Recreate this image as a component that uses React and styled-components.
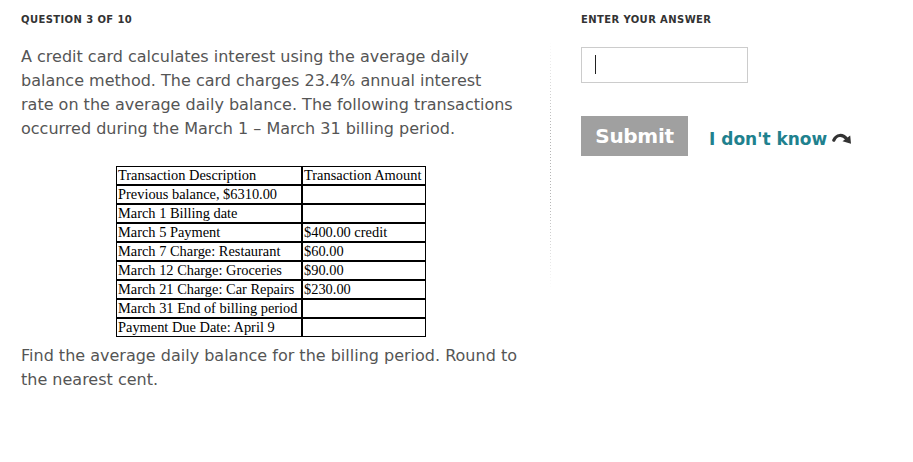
import React from 'react';
import styled, { createGlobalStyle } from 'styled-components';

const GlobalStyle = createGlobalStyle`
  body {
    margin: 0;
    background: #fff;
    font-family: "DejaVu Sans", Verdana, sans-serif;
  }
`;

const Page = styled.div`
  display: flex;
  align-items: flex-start;
  width: 913px;
  height: 462px;
  box-sizing: border-box;
  padding-top: 13px;
`;

const Question = styled.section`
  width: 550px;
  box-sizing: border-box;
  padding-left: 21px;
`;

const Label = styled.div`
  font-size: 10px;
  line-height: 14px;
  font-weight: bold;
  letter-spacing: 0.4px;
  color: #333;
  text-transform: uppercase;
`;

const Prompt = styled.p`
  width: 510px;
  margin: ${({ $top }) => $top || 0} 0 0;
  font-size: 16px;
  line-height: 24px;
  color: #555;
`;

const Transactions = styled.table`
  margin: 25px 0 0 95px;
  width: 310px;
  border: 1px solid #000;
  border-spacing: 0;
  font-family: "Liberation Serif", "Times New Roman", serif;
  font-size: 14.4px;
  color: #000;
`;

const Cell = styled.td`
  height: 17px;
  padding: 0 0 0 1px;
  line-height: 17px;
  white-space: nowrap;
  border-bottom: ${({ $last }) => ($last ? 'none' : '2px solid #000')};
  border-right: ${({ $first }) => ($first ? '2px solid #000' : 'none')};
  width: ${({ $first }) => ($first ? '183px' : 'auto')};
`;

const Divider = styled.div`
  width: 1px;
  height: 250px;
  margin-top: 27px;
  background: repeating-linear-gradient(to bottom, #b5b5b5 0 1px, transparent 1px 3px);
  mask-image: linear-gradient(to bottom, transparent, #000 35%, #000 65%, transparent);
`;

const Answer = styled.section`
  padding-left: 30px;
  display: flex;
  flex-direction: column;
`;

const InputWrap = styled.div`
  position: relative;
  margin-top: 20px;
  width: 167px;
  height: 36px;
`;

const AnswerInput = styled.input`
  width: 100%;
  height: 100%;
  box-sizing: border-box;
  border: 1px solid #ccc;
  padding: 0 13px;
  font-family: inherit;
  font-size: 16px;
  color: #333;
  outline: none;
`;

const Caret = styled.span`
  position: absolute;
  left: 14px;
  top: 8px;
  width: 1px;
  height: 19px;
  background: #222;
  pointer-events: none;
`;

const Actions = styled.div`
  display: flex;
  align-items: center;
  gap: 21px;
  margin-top: 33px;
`;

const SubmitButton = styled.button`
  width: 107px;
  height: 40px;
  border: none;
  background: #a0a0a0;
  color: #fff;
  font-family: "DejaVu Sans", Verdana, sans-serif;
  font-size: 20px;
  font-weight: bold;
  letter-spacing: -0.3px;
  cursor: pointer;
`;

const SkipLink = styled.a`
  display: flex;
  align-items: center;
  gap: 5px;
  margin-top: 5px;
  color: #1f818e;
  font-size: 17px;
  font-weight: bold;
  text-decoration: none;
  cursor: pointer;
`;

const rows = [
  ['Transaction Description', 'Transaction Amount'],
  ['Previous balance, $6310.00', ''],
  ['March 1 Billing date', ''],
  ['March 5 Payment', '$400.00 credit'],
  ['March 7 Charge: Restaurant', '$60.00'],
  ['March 12 Charge: Groceries', '$90.00'],
  ['March 21 Charge: Car Repairs', '$230.00'],
  ['March 31 End of billing period', ''],
  ['Payment Due Date: April 9', ''],
];

const CurvedArrow = () => (
  <svg width="21" height="13" viewBox="0 0 21 13" fill="none">
    <path d="M1.8 8.2 C4.5 2.5, 10.5 1.8, 14.5 6.8" stroke="#333" strokeWidth="3.2" strokeLinecap="round" />
    <path d="M10.5 9.2 L19 11.8 L18.2 3.6 Z" fill="#333" />
  </svg>
);

export default function App() {
  return (
    <>
      <GlobalStyle />
      <Page>
        <Question>
          <Label>Question 3 of 10</Label>
          <Prompt $top="18px">
            A credit card calculates interest using the average daily balance method. The card
            charges 23.4% annual interest<br />rate on the average daily balance. The following
            transactions occurred during the March 1 – March 31 billing period.
          </Prompt>
          <Transactions>
            <tbody>
              {rows.map(([desc, amount], i) => (
                <tr key={i}>
                  <Cell $first $last={i === rows.length - 1}>{desc}</Cell>
                  <Cell $last={i === rows.length - 1}>{amount}</Cell>
                </tr>
              ))}
            </tbody>
          </Transactions>
          <Prompt $top="7px">
            Find the average daily balance for the billing period. Round to the nearest cent.
          </Prompt>
        </Question>
        <Divider />
        <Answer>
          <Label>Enter your answer</Label>
          <InputWrap>
            <AnswerInput />
            <Caret />
          </InputWrap>
          <Actions>
            <SubmitButton>Submit</SubmitButton>
            <SkipLink>
              I don't know
              <CurvedArrow />
            </SkipLink>
          </Actions>
        </Answer>
      </Page>
    </>
  );
}
